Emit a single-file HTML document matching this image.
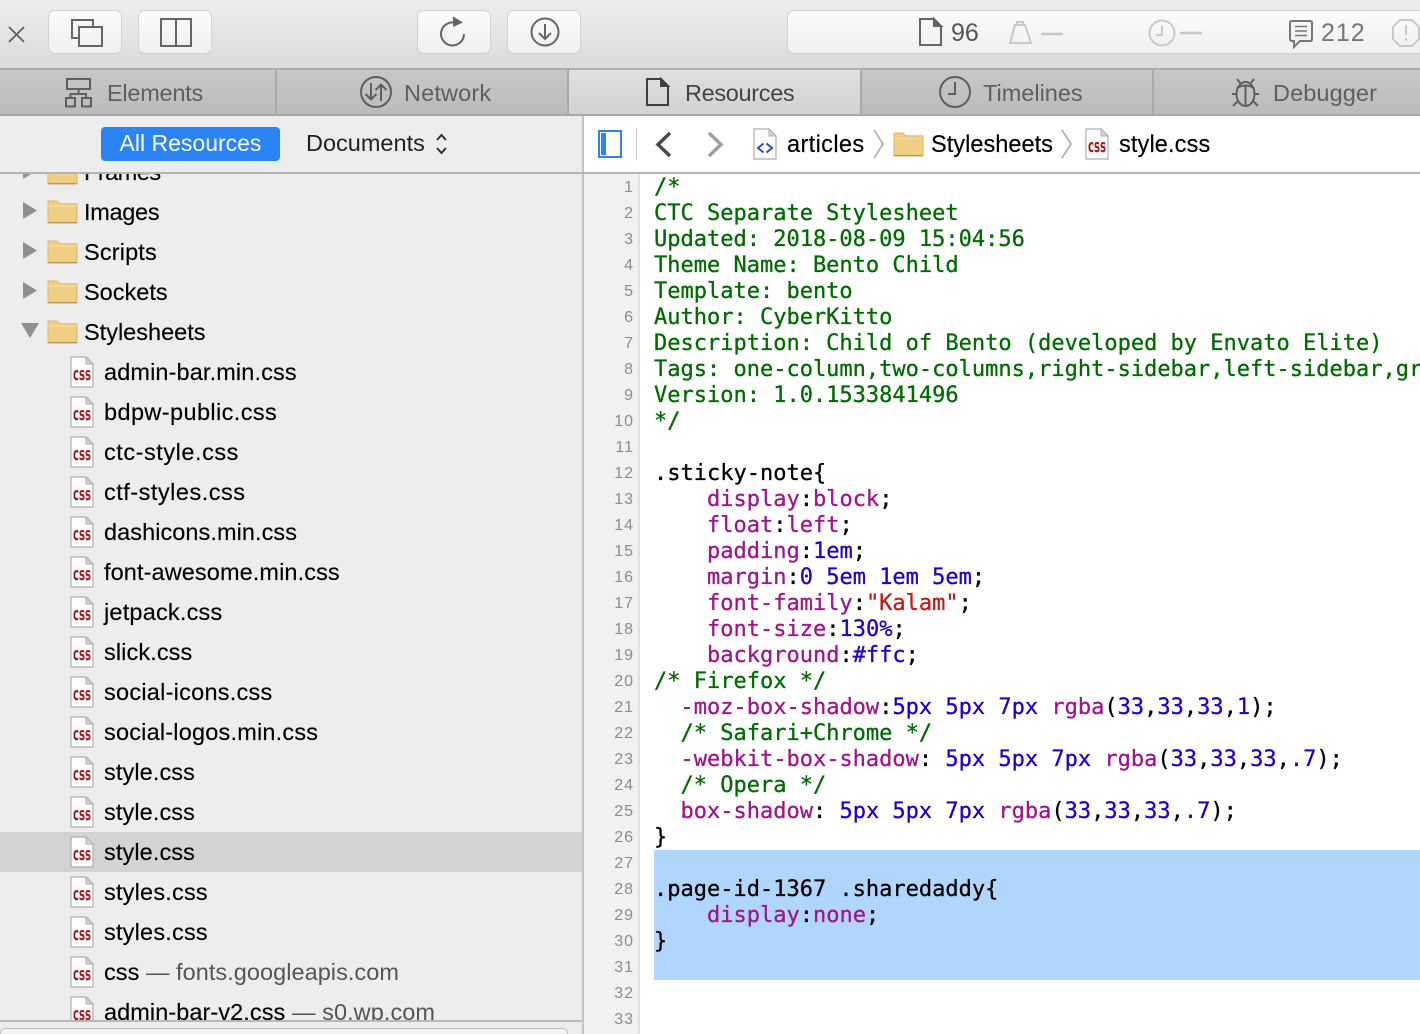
<!DOCTYPE html>
<html><head><meta charset="utf-8"><style>
html,body{margin:0;padding:0;width:1420px;height:1034px;overflow:hidden;background:#fff}
body{position:relative;font-family:"Liberation Sans",sans-serif;color:#000}
.a{position:absolute}
.t{position:absolute;white-space:pre;font-size:23.5px;line-height:40px;height:40px;-webkit-text-stroke:.15px #000}
.btn{position:absolute;top:11px;height:42px;background:linear-gradient(#fbfbfb,#f0f0f0);border-radius:6px;box-shadow:0 0 0 1px #d2d2d2,0 1px 1px #bdbdbd;box-sizing:border-box}
.tab{position:absolute;top:70px;height:44px;background:linear-gradient(#c7c7c7,#bbb);border-right:2px solid #a9a9a9;box-sizing:border-box}
.tl{position:absolute;top:70px;line-height:46px;font-size:23.5px;color:#5f5f5f;white-space:pre}
pre{position:absolute;margin:0;left:654px;top:175px;width:766px;height:859px;overflow:hidden;font:22px/26px "DejaVu Sans Mono",monospace;color:#000;white-space:pre;-webkit-text-stroke:.3px}
.c{color:#006b00}.p{color:#a0148c}.n{color:#2000cc}.s{color:#c41a16}
.ln{position:absolute;left:590px;width:44px;text-align:right;font-size:16px;letter-spacing:1px;line-height:26px;color:#8c8c8c}
svg{position:absolute;overflow:visible}
.cap{font-size:23.6px;line-height:40px;position:absolute;white-space:pre;-webkit-text-stroke:.15px #000}
.g{color:#555;-webkit-text-stroke:0}
.x{font-family:"DejaVu Sans",sans-serif;font-size:18px;font-weight:bold;fill:#a01c20}
</style></head><body>
<svg width="0" height="0" style="position:absolute"><defs>
<symbol id="f" viewBox="0 0 32 26" preserveAspectRatio="none" overflow="visible"><path d="M1 5 V2 Q1 1 2 1 H10 L13 4 H30 Q31 4 31 5 V24 Q31 25 30 25 H2 Q1 25 1 24Z" fill="#f0cf85" stroke="#d9b56f" stroke-width="1"/><path d="M1.500 6.500 H30.500" stroke="#f6dca2" stroke-width="1.200"/><path d="M1.500 24.500 H30.500" stroke="#bd9b5c" stroke-width="1.500"/></symbol>
<symbol id="d" viewBox="0 0 24 32" overflow="visible"><path d="M1 1 H16 L23 8 V31 H1Z" fill="#fdfdfd" stroke="#aeaeae" stroke-width="1.200"/><path d="M16 1 V8 H23Z" fill="#d6d6d6" stroke="#aeaeae" stroke-width="1"/></symbol>
</defs></svg>

<!-- toolbar -->
<div class="a" style="left:0;top:0;width:1420px;height:68px;background:linear-gradient(#ededed,#dbdbdb)"></div>
<div class="a" style="left:0;top:68px;width:1420px;height:2px;background:#aeaeae"></div>
<svg style="left:8px;top:26px" width="17" height="17"><path d="M1 1 L16 16 M16 1 L1 16" stroke="#5f5f5f" stroke-width="1.800" fill="none"/></svg>
<div class="btn" style="left:49px;width:72px"></div>
<svg style="left:70px;top:18px" width="33" height="29" fill="none" stroke="#666" stroke-width="2"><path d="M23 9 V2 H2 V20 H9"/><rect x="9" y="9" width="23" height="19"/></svg>
<div class="btn" style="left:139px;width:72px"></div>
<svg style="left:159px;top:17px" width="34" height="30" fill="none" stroke="#666" stroke-width="2"><rect x="2" y="2" width="30" height="27"/><path d="M17 2 V29"/></svg>
<div class="btn" style="left:418px;width:72px"></div>
<svg style="left:438px;top:15px" width="32" height="34" fill="none" stroke="#666" stroke-width="2"><path d="M18 8 A11.500 11.500 0 1 0 26 19"/><path d="M15 1.500 L25 7.500 L15 12Z" fill="#666" stroke="none"/></svg>
<div class="btn" style="left:508px;width:72px"></div>
<svg style="left:529px;top:16px" width="32" height="32" fill="none" stroke="#666" stroke-width="2"><circle cx="16" cy="16" r="13.500"/><path d="M16 8 V23 M10 17 L16 23 L22 17"/></svg>

<div class="a" style="left:788px;top:11px;width:632px;height:42px;background:linear-gradient(#fbfbfb,#f0f0f0);border-radius:6px 0 0 6px;box-shadow:0 0 0 1px #d2d2d2,0 1px 1px #bdbdbd;clip-path:inset(-2px 0 -2px -2px)"></div>
<svg style="left:919px;top:18px" width="24" height="28" fill="none" stroke="#666" stroke-width="2"><path d="M1 1 H15 L22 8 V27 H1Z"/><path d="M15 1 V8 H22Z" fill="#666"/></svg>
<div class="a" style="left:951px;top:15px;font-size:25px;line-height:36px;color:#555">96</div>
<svg style="left:1009px;top:20px" width="54" height="26" fill="none" stroke="#c9c9c9" stroke-width="2"><path d="M6 5 H16 L22 23 H1Z"/><path d="M8 5 V2 H14 V5"/><path d="M32 14 H54" stroke-width="2.500"/></svg>
<svg style="left:1148px;top:19px" width="56" height="28" fill="none" stroke="#c9c9c9" stroke-width="2"><circle cx="14" cy="14" r="12.500"/><path d="M14 7 V16 H8"/><path d="M32 14 H54" stroke-width="2.500"/></svg>
<svg style="left:1289px;top:19px" width="26" height="30" fill="none" stroke="#777" stroke-width="2"><path d="M3 2 H21 Q23 2 23 4 V20 Q23 22 21 22 H11 L5 28 V22 H3 Q1 22 1 20 V4 Q1 2 3 2Z"/><path d="M6 7.500 H18 M6 12 H18 M6 16.500 H18" stroke-width="1.600"/></svg>
<div class="a" style="left:1321px;top:15px;font-size:25px;line-height:36px;color:#777;letter-spacing:1px">212</div>
<svg style="left:1392px;top:19px" width="28" height="28" fill="none" stroke="#c9c9c9" stroke-width="2"><path d="M8 1 H20 L27 8 V20 L20 27 H8 L1 20 V8Z"/><path d="M14 6 V16 M14 19 V22"/></svg>

<!-- tabs -->
<div class="tab" style="left:0;width:277px"></div>
<div class="tab" style="left:277px;width:292px"></div>
<div class="tab" style="left:569px;width:293px;background:linear-gradient(#e0e0e0,#d2d2d2)"></div>
<div class="tab" style="left:862px;width:292px"></div>
<div class="tab" style="left:1154px;width:266px;border-right:0"></div>
<div class="a" style="left:0;top:114px;width:1420px;height:2px;background:#a8a8a8"></div>
<svg style="left:64px;top:78px" width="30" height="30" fill="none" stroke="#5f5f5f" stroke-width="2"><rect x="3" y="1" width="23" height="10"/><path d="M14.500 11 V16 M6.500 20 V16 H22 V20"/><rect x="2" y="20" width="9" height="8.500"/><rect x="18" y="20" width="9" height="8.500"/></svg>
<div class="tl" style="left:107px;letter-spacing:-.25px">Elements</div>
<svg style="left:360px;top:76px" width="32" height="32" fill="none" stroke="#5f5f5f" stroke-width="2"><circle cx="16" cy="16" r="15"/><path d="M11 7 V23 M5.500 18 L11 23.500 L16.500 18 M21 25 V9 M15.500 14 L21 8.500 L26.500 14"/></svg>
<div class="tl" style="left:404px;letter-spacing:.15px">Network</div>
<svg style="left:646px;top:78px" width="24" height="28" fill="none" stroke="#3f3f3f" stroke-width="2"><path d="M1 1 H15 L22 8 V27 H1Z"/><path d="M15 1 V8 H22Z" fill="#3f3f3f"/></svg>
<div class="tl" style="left:685px;color:#444;letter-spacing:-.33px">Resources</div>
<svg style="left:939px;top:76px" width="32" height="32" fill="none" stroke="#5f5f5f" stroke-width="2"><circle cx="16" cy="16" r="15"/><path d="M16 6 V18 H9"/></svg>
<div class="tl" style="left:983px">Timelines</div>
<svg style="left:1231px;top:77px" width="30" height="32" fill="none" stroke="#5f5f5f" stroke-width="2"><ellipse cx="14.500" cy="17" rx="9" ry="12"/><path d="M6 11 Q14.500 6 23 11 M14.500 9 V29 M6 2 L10 7 M23 2 L19 7 M1 17 H5.500 M24 17 H28 M2 29 L7 24 M27 29 L22 24"/></svg>
<div class="tl" style="left:1273px;letter-spacing:.1px">Debugger</div>

<!-- sidebar -->
<div class="a" style="left:0;top:116px;width:582px;height:918px;background:#ededed"></div>
<div class="a" style="left:582px;top:116px;width:2px;height:918px;background:#c4c4c4"></div>
<div class="a" style="left:101px;top:127px;width:179px;height:34px;background:#2a84f6;border-radius:4px;color:#fff;font-size:23px;line-height:32px;text-align:center">All Resources</div>
<div class="a" style="left:306px;top:126px;font-size:23.500px;line-height:34px;color:#222">Documents</div>
<svg style="left:435px;top:133px" width="13" height="22" fill="none" stroke="#333" stroke-width="2"><path d="M2 7 L6.500 2 L11 7 M2 15 L6.500 20 L11 15"/></svg>

<div class="a" style="left:0;top:174px;width:582px;height:846px;overflow:hidden" id="list">
<div class="a" style="left:0;top:658px;width:582px;height:40px;background:#d3d3d3"></div>
<div class="t" style="left:84px;top:-22px;letter-spacing:-.5px">Frames</div>
<svg style="left:23px;top:-12px" width="15" height="17"><path d="M0 0 L14 8.500 L0 17Z" fill="#8f8f8f"/></svg>
<svg style="left:47px;top:-13px" width="31" height="24"><use href="#f" width="31" height="24"/></svg>
<svg style="left:23px;top:28px" width="15" height="17"><path d="M0 0 L14 8.500 L0 17Z" fill="#8f8f8f"/></svg>
<svg style="left:47px;top:26px" width="31" height="24"><use href="#f" width="31" height="24"/></svg>
<div class="t" style="left:84px;top:18px;letter-spacing:-.3px">Images</div>
<svg style="left:23px;top:68px" width="15" height="17"><path d="M0 0 L14 8.500 L0 17Z" fill="#8f8f8f"/></svg>
<svg style="left:47px;top:66px" width="31" height="24"><use href="#f" width="31" height="24"/></svg>
<div class="t" style="left:84px;top:58px;letter-spacing:.15px">Scripts</div>
<svg style="left:23px;top:108px" width="15" height="17"><path d="M0 0 L14 8.500 L0 17Z" fill="#8f8f8f"/></svg>
<svg style="left:47px;top:106px" width="31" height="24"><use href="#f" width="31" height="24"/></svg>
<div class="t" style="left:84px;top:98px">Sockets</div>
<svg style="left:21px;top:149px" width="18" height="16"><path d="M0 0 H18 L9 15Z" fill="#8f8f8f"/></svg>
<svg style="left:47px;top:146px" width="31" height="24"><use href="#f" width="31" height="24"/></svg>
<div class="t" style="left:84px;top:138px">Stylesheets</div>

<svg style="left:70px;top:182px" width="24" height="32"><use href="#d" width="24" height="32"/><text class="x" x="3" y="24" textLength="18" lengthAdjust="spacingAndGlyphs">css</text></svg>
<div class="t" style="left:104px;top:178px;letter-spacing:.12px">admin-bar.min.css</div>
<svg style="left:70px;top:222px" width="24" height="32"><use href="#d" width="24" height="32"/><text class="x" x="3" y="24" textLength="18" lengthAdjust="spacingAndGlyphs">css</text></svg>
<div class="t" style="left:104px;top:218px;letter-spacing:.4px">bdpw-public.css</div>
<svg style="left:70px;top:262px" width="24" height="32"><use href="#d" width="24" height="32"/><text class="x" x="3" y="24" textLength="18" lengthAdjust="spacingAndGlyphs">css</text></svg>
<div class="t" style="left:104px;top:258px;letter-spacing:.54px">ctc-style.css</div>
<svg style="left:70px;top:302px" width="24" height="32"><use href="#d" width="24" height="32"/><text class="x" x="3" y="24" textLength="18" lengthAdjust="spacingAndGlyphs">css</text></svg>
<div class="t" style="left:104px;top:298px;letter-spacing:.5px">ctf-styles.css</div>
<svg style="left:70px;top:342px" width="24" height="32"><use href="#d" width="24" height="32"/><text class="x" x="3" y="24" textLength="18" lengthAdjust="spacingAndGlyphs">css</text></svg>
<div class="t" style="left:104px;top:338px;letter-spacing:.06px">dashicons.min.css</div>
<svg style="left:70px;top:382px" width="24" height="32"><use href="#d" width="24" height="32"/><text class="x" x="3" y="24" textLength="18" lengthAdjust="spacingAndGlyphs">css</text></svg>
<div class="t" style="left:104px;top:378px;letter-spacing:.1px">font-awesome.min.css</div>
<svg style="left:70px;top:422px" width="24" height="32"><use href="#d" width="24" height="32"/><text class="x" x="3" y="24" textLength="18" lengthAdjust="spacingAndGlyphs">css</text></svg>
<div class="t" style="left:104px;top:418px;letter-spacing:.2px">jetpack.css</div>
<svg style="left:70px;top:462px" width="24" height="32"><use href="#d" width="24" height="32"/><text class="x" x="3" y="24" textLength="18" lengthAdjust="spacingAndGlyphs">css</text></svg>
<div class="t" style="left:104px;top:458px;letter-spacing:.1px">slick.css</div>
<svg style="left:70px;top:502px" width="24" height="32"><use href="#d" width="24" height="32"/><text class="x" x="3" y="24" textLength="18" lengthAdjust="spacingAndGlyphs">css</text></svg>
<div class="t" style="left:104px;top:498px;letter-spacing:.25px">social-icons.css</div>
<svg style="left:70px;top:542px" width="24" height="32"><use href="#d" width="24" height="32"/><text class="x" x="3" y="24" textLength="18" lengthAdjust="spacingAndGlyphs">css</text></svg>
<div class="t" style="left:104px;top:538px;letter-spacing:.2px">social-logos.min.css</div>
<svg style="left:70px;top:582px" width="24" height="32"><use href="#d" width="24" height="32"/><text class="x" x="3" y="24" textLength="18" lengthAdjust="spacingAndGlyphs">css</text></svg>
<div class="t" style="left:104px;top:578px;letter-spacing:.1px">style.css</div>
<svg style="left:70px;top:622px" width="24" height="32"><use href="#d" width="24" height="32"/><text class="x" x="3" y="24" textLength="18" lengthAdjust="spacingAndGlyphs">css</text></svg>
<div class="t" style="left:104px;top:618px;letter-spacing:.1px">style.css</div>
<svg style="left:70px;top:662px" width="24" height="32"><use href="#d" width="24" height="32"/><text class="x" x="3" y="24" textLength="18" lengthAdjust="spacingAndGlyphs">css</text></svg>
<div class="t" style="left:104px;top:658px;letter-spacing:.1px">style.css</div>
<svg style="left:70px;top:702px" width="24" height="32"><use href="#d" width="24" height="32"/><text class="x" x="3" y="24" textLength="18" lengthAdjust="spacingAndGlyphs">css</text></svg>
<div class="t" style="left:104px;top:698px;letter-spacing:.2px">styles.css</div>
<svg style="left:70px;top:742px" width="24" height="32"><use href="#d" width="24" height="32"/><text class="x" x="3" y="24" textLength="18" lengthAdjust="spacingAndGlyphs">css</text></svg>
<div class="t" style="left:104px;top:738px;letter-spacing:.2px">styles.css</div>
<svg style="left:70px;top:782px" width="24" height="32"><use href="#d" width="24" height="32"/><text class="x" x="3" y="24" textLength="18" lengthAdjust="spacingAndGlyphs">css</text></svg>
<div class="t" style="left:104px;top:778px;letter-spacing:.04px">css <span class="g">— fonts.googleapis.com</span></div>
<svg style="left:70px;top:822px" width="24" height="32"><use href="#d" width="24" height="32"/><text class="x" x="3" y="24" textLength="18" lengthAdjust="spacingAndGlyphs">css</text></svg>
<div class="t" style="left:104px;top:818px;letter-spacing:.07px">admin-bar-v2.css <span class="g">— s0.wp.com</span></div>
</div>
<div class="a" style="left:0;top:172px;width:1420px;height:2px;background:#b4b4b4"></div>
<div class="a" style="left:0;top:1020px;width:582px;height:2px;background:#b8b8b8"></div>
<div class="a" style="left:0;top:1028px;width:568px;height:6px;box-sizing:border-box;border:1px solid #bbb;border-bottom:0;border-radius:5px 5px 0 0;background:#f4f4f4"></div>

<!-- nav bar -->
<svg style="left:598px;top:130px" width="24" height="28" fill="none"><rect x="1" y="1" width="22" height="26" stroke="#2a84f6" stroke-width="2"/><rect x="3" y="3" width="5" height="22" fill="#2a84f6"/></svg>
<div class="a" style="left:636px;top:128px;width:1px;height:32px;background:#c8c8c8"></div>
<svg style="left:655px;top:131px" width="18" height="27" fill="none" stroke="#4a4a4a" stroke-width="3.500"><path d="M15 2 L3 13.500 L15 25"/></svg>
<svg style="left:706px;top:131px" width="18" height="27" fill="none" stroke="#a0a0a0" stroke-width="3.500"><path d="M3 2 L15 13.500 L3 25"/></svg>
<svg style="left:753px;top:128px" width="24" height="32"><use href="#d" width="24" height="32"/><path d="M10.500 15.500 L5 20 L10.500 24.500 M13.500 15.500 L19 20 L13.500 24.500" fill="none" stroke="#2a4fc4" stroke-width="2"/></svg>
<div class="cap" style="left:787px;top:125px;letter-spacing:.35px">articles</div>
<svg style="left:873px;top:129px" width="12" height="30" fill="none" stroke="#a8a8a8" stroke-width="1.500"><path d="M1 1 L10 15 L1 29"/></svg>
<svg style="left:893px;top:132px" width="31" height="25"><use href="#f" width="31" height="25"/></svg>
<div class="cap" style="left:931px;top:125px">Stylesheets</div>
<svg style="left:1061px;top:129px" width="12" height="30" fill="none" stroke="#a8a8a8" stroke-width="1.500"><path d="M1 1 L10 15 L1 29"/></svg>
<svg style="left:1085px;top:128px" width="24" height="32"><use href="#d" width="24" height="32"/><text class="x" x="3" y="24" textLength="18" lengthAdjust="spacingAndGlyphs">css</text></svg>
<div class="cap" style="left:1119px;top:125px;letter-spacing:.1px">style.css</div>

<!-- code -->
<div class="a" style="left:584px;top:174px;width:54px;height:860px;background:#f1f1f1;border-right:2px solid #e2e2e2"></div>
<div class="a" style="left:654px;top:850px;width:766px;height:130px;background:#b0d6fd"></div>
<div class="ln" style="top:175px">1<br>2<br>3<br>4<br>5<br>6<br>7<br>8<br>9<br>10<br>11<br>12<br>13<br>14<br>15<br>16<br>17<br>18<br>19<br>20<br>21<br>22<br>23<br>24<br>25<br>26<br>27<br>28<br>29<br>30<br>31<br>32</div>
<div class="ln" style="top:1007px;height:26px;overflow:hidden">33</div>
<pre><span class="c">/*
CTC Separate Stylesheet
Updated: 2018-08-09 15:04:56
Theme Name: Bento Child
Template: bento
Author: CyberKitto
Description: Child of Bento (developed by Envato Elite)
Tags: one-column,two-columns,right-sidebar,left-sidebar,grid-layout
Version: 1.0.1533841496
*/</span>

.sticky-note{
    <span class="p">display</span>:<span class="p">block</span>;
    <span class="p">float</span>:<span class="p">left</span>;
    <span class="p">padding</span>:<span class="n">1em</span>;
    <span class="p">margin</span>:<span class="n">0 5em 1em 5em</span>;
    <span class="p">font-family</span>:<span class="s">"Kalam"</span>;
    <span class="p">font-size</span>:<span class="n">130%</span>;
    <span class="p">background</span>:<span class="n">#ffc</span>;
<span class="c">/* Firefox */</span>
  <span class="p">-moz-box-shadow</span>:<span class="n">5px 5px 7px</span> <span class="p">rgba</span>(<span class="n">33</span>,<span class="n">33</span>,<span class="n">33</span>,<span class="n">1</span>);
  <span class="c">/* Safari+Chrome */</span>
  <span class="p">-webkit-box-shadow</span>: <span class="n">5px 5px 7px</span> <span class="p">rgba</span>(<span class="n">33</span>,<span class="n">33</span>,<span class="n">33</span>,<span class="n">.7</span>);
  <span class="c">/* Opera */</span>
  <span class="p">box-shadow</span>: <span class="n">5px 5px 7px</span> <span class="p">rgba</span>(<span class="n">33</span>,<span class="n">33</span>,<span class="n">33</span>,<span class="n">.7</span>);
}

.page-id-1367 .sharedaddy{
    <span class="p">display</span>:<span class="p">none</span>;
}
</pre>
</body></html>
